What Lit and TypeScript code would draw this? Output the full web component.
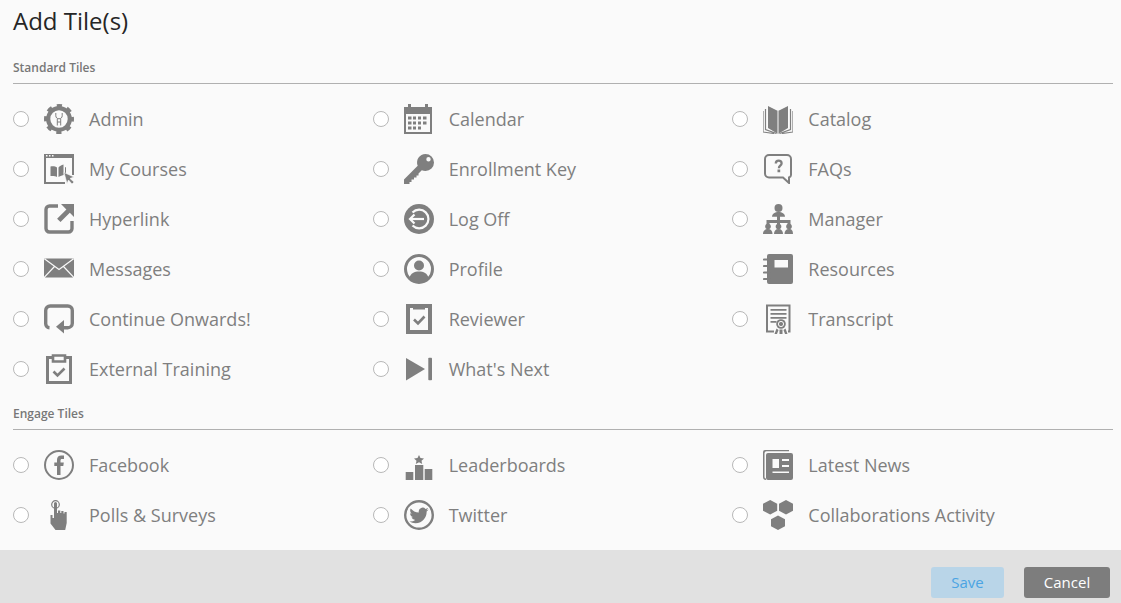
import { LitElement, html, css, svg } from "lit";
import { customElement } from "lit/decorators.js";

const bg = "#fafafa";
const icons: Record<string, unknown> = {
  admin: svg`<circle cx="15" cy="15" r="10.800" fill="none" stroke-width="4.200"/><circle cx="15" cy="15" r="13.400" fill="none" stroke-width="3.200" stroke-dasharray="5.200 5.320" stroke-dashoffset="2.600"/><path d="M11.800 9v2.800c0 1.800 1.400 3 3.200 3s3.200-1.200 3.200-3V9M13.300 14.800v6.700M16.700 14.800v6.700M13.300 18h3.400" fill="none" stroke-width="1"/>`,
  courses: svg`<path d="M0 0h30v4H0zM0 4h2v24h19v2H0z"/><path d="M28 4h2v17h-2z"/><path d="M2 1h1.500v1.500H2zM5 1h1.500v1.500H5zM8 1h1.500v1.500H8z" fill="${bg}"/><path d="M6.500 12.500c2.500-.500 5-.200 6.500 1v9.500c-1.500-1-4-1.300-6.500-1zM14.500 13.500c1-1.300 3-2.500 5-3v10.500c-2 .500-4 1.300-5 2zM21 13v8l1 .500v-8z"/><path d="M20 18.500l10 4.500-4 1.500 4 3.500-2 2-3.500-4-1.500 3.500z" stroke="${bg}" stroke-width=".6"/>`,
  hyperlink: svg`<path d="M14 2H5.500A3.500 3.500 0 0 0 2 5.500v19A3.500 3.500 0 0 0 5.500 28h19a3.500 3.500 0 0 0 3.500-3.500V17" fill="none" stroke-width="3.400"/><path d="M17 0h13v13l-4.200-4.200-9.300 9.300-3.400-3.400 9.300-9.300z"/>`,
  messages: svg`<path d="M0 4h30v20H0z"/><path d="M0 4.500l15 11 15-11M0 23.500l10.500-11M30 23.500l-10.500-11M0 24h30M1 4h28" fill="none" stroke="${bg}" stroke-width="1.200"/>`,
  onwards: svg`<path d="M5.500 23.700A4 4 0 0 1 1.700 19.700V6.500a4.500 4.500 0 0 1 4.500-4.500h17.600a4.500 4.500 0 0 1 4.500 4.500v12.700a4.500 4.500 0 0 1-4.500 4.500H16" fill="none" stroke-width="3.400"/><path d="M12 22.800l8-6.800v13.500z"/>`,
  external: svg`<path d="M9 3.500H3.500v25h23v-25H21" fill="none" stroke-width="3"/><path d="M9 1.500h12v6H9z" fill="none" stroke-width="2.600"/><path d="M9.500 17.500l4 4 7-7" fill="none" stroke-width="2.600"/>`,
  calendar: svg`<path fill-rule="evenodd" d="M0 3h4V0h3v3h14V0h3v3h4v27H0zM2 10v18h24V10z"/><path d="M4 12.500h3.500v3H4zM9 12.500h3v3H9zM14 12.500h3v3h-3zM19 12.500h3.500v3H19zM4 17.500h3.500v3H4zM9 17.500h3v3H9zM14 17.500h3v3h-3zM19 17.500h3.500v3H19zM4 22.500h3.500v3H4zM9 22.500h3v3H9zM14 22.500h3v3h-3z"/>`,
  key: svg`<path fill-rule="evenodd" d="M21.500 0A8.500 8.500 0 0 1 30 8.500 8.500 8.500 0 0 1 21.500 17c-1.300 0-2.600-.300-3.700-.800l-3.300 3.300v2h-2v2h-2.500v2h-2.500v2.500H5.500V30H0v-4.500L13.700 11.800A8.500 8.500 0 0 1 21.500 0zM24.500 3a2.200 2.200 0 1 0 0 4.400A2.200 2.200 0 0 0 24.500 3z"/>`,
  logoff: svg`<circle cx="15" cy="15" r="15"/><path d="M8.500 8.500A9.300 9.300 0 1 1 8.500 21.500" fill="none" stroke="${bg}" stroke-width="2.200"/><path d="M20 15H6" fill="none" stroke="${bg}" stroke-width="2.200"/><path d="M10.500 10.500L6 15l4.500 4.500" fill="none" stroke="${bg}" stroke-width="2.200"/>`,
  profile: svg`<circle cx="15" cy="15" r="13.500" fill="none" stroke-width="3"/><circle cx="15" cy="11.500" r="5"/><path d="M5.500 24c1-5 5-6.500 9.500-6.500s8.500 1.500 9.500 6.500A13 13 0 0 1 15 28a13 13 0 0 1-9.500-4z"/>`,
  reviewer: svg`<path fill-rule="evenodd" d="M2 0h26v30H2zM6 4v22h18V4h-3v1.500H9V4z"/><path d="M10 15.500l4 4 6.500-7" fill="none" stroke-width="2.600"/>`,
  next: svg`<path d="M2 4l19 11L2 26.500z"/><rect x="24.300" y="3.700" width="3.700" height="22.600" rx=".8"/>`,
  catalog: svg`<path d="M15 7L5 2v22l10 6 10-6V2z"/><path d="M15 7v23" fill="none" stroke="${bg}" stroke-width="1"/><path d="M2.500 5v20.500l11 4M27.500 5v20.500l-11 4M0 7v21l11 1.500M30 7v21l-11 1.500" fill="none" stroke-width="1.200"/>`,
  faqs: svg`<path d="M6 1h18a4 4 0 0 1 4 4v16c0 1.500-.800 2-2 2.500V29l-6-5.500H6a4 4 0 0 1-4-4V5a4 4 0 0 1 4-4z" fill="none" stroke-width="2"/><path d="M12.800 9.500c0-3.800 5.800-3.800 5.800-.300 0 2.600-2.700 2.400-2.700 5" fill="none" stroke-width="2.300"/><path d="M14.500 15.500h2.700v2.700h-2.700z"/>`,
  manager: svg`<circle cx="15.500" cy="4" r="4"/><path d="M9 12.700c0-3 3-4.700 6.500-4.700s6.500 1.700 6.500 4.700z"/><path d="M14 12h3v4h10.500v6h-3v-3H17v3h-3v-3H6.500v3h-3v-6H14z"/><circle cx="5" cy="22.500" r="2.800"/><circle cx="15.500" cy="22.500" r="2.800"/><circle cx="26" cy="22.500" r="2.800"/><path d="M0 30c0-3 2-5 5-5s4.500 2 4.500 5zM11 30c0-3 1.500-5 4.500-5s4.500 2 4.500 5zM21.500 30c0-3 1.500-5 4.500-5s4 2 4 5z"/>`,
  resources: svg`<path fill-rule="evenodd" d="M4 2a2 2 0 0 1 2-2h22a2 2 0 0 1 2 2v26a2 2 0 0 1-2 2H6a2 2 0 0 1-2-2zM11.500 6v7.500h13.500V6z"/><path d="M1 5.500h5M1 12h5M1 18.500h5M1 25h5" fill="none" stroke-width="2.200" stroke-linecap="round"/>`,
  transcript: svg`<g transform="translate(1 0)"><path d="M10 27.500H3V1.500h22.500v26H24" fill="none" stroke-width="2"/><path d="M6.500 5h16v1.800h-16zM6.500 9h16v1.800h-16zM6.500 13h16v1.800h-16zM6.500 17h6v1.800h-6z"/><circle cx="17" cy="20" r="4.800"/><circle cx="17" cy="20" r="2.600" fill="none" stroke="${bg}" stroke-width="1"/><path d="M12.500 24.500l-2 5.500h2.500l1.500-4zM21.500 24.500l2 5.500H21l-1.500-4zM15.500 25.500h3V30h-3z"/></g>`,
  facebook: svg`<circle cx="15" cy="15" r="14" fill="none" stroke-width="2"/><path d="M13 25v-9h-2.700v-3.500H13v-2.700c0-2.800 1.700-4.300 4.200-4.300h2.800v3.400h-2c-1.200 0-1.500.600-1.500 1.500v2.100h3.300l-.500 3.500h-2.800v9z"/>`,
  polls: svg`<g transform="translate(2.500 0)"><circle cx="9" cy="4.500" r="3.800" fill="none" stroke-width="1.200"/><path d="M7.500 3.500a1.500 1.500 0 0 1 3 0V13h1v-2.500h2.300V13h1v-2h2.200v2.500h1V12h2.200v11l-1.500 7H9L4 23.500V15h2v3h1.500z"/></g>`,
  leader: svg`<path d="M1.700 22h7.600v8H1.700zM11 15h8.300v15H11zM20.700 19h7.600v11h-7.600z"/><path transform="translate(-.5 2.500)" d="M15.500 2.500l1.500 3 3.500.400-2.500 2.300.7 3.300-3.200-1.700-3.200 1.700.7-3.300-2.500-2.300 3.500-.400z"/>`,
  twitter: svg`<circle cx="15" cy="15" r="13.800" fill="none" stroke-width="2.400"/><path transform="translate(5.400 5.900) scale(.8)" d="M23.953 4.570a10 10 0 01-2.825.775 4.958 4.958 0 002.163-2.723c-.951.555-2.005.959-3.127 1.184a4.920 4.920 0 00-8.384 4.482C7.690 8.095 4.067 6.130 1.640 3.162a4.822 4.822 0 00-.666 2.475c0 1.710.870 3.213 2.188 4.096a4.904 4.904 0 01-2.228-.616v.060a4.923 4.923 0 003.946 4.827 4.996 4.996 0 01-2.212.085 4.936 4.936 0 004.604 3.417 9.867 9.867 0 01-6.102 2.105c-.390 0-.779-.023-1.170-.067a13.995 13.995 0 007.557 2.209c9.053 0 13.998-7.496 13.998-13.985 0-.210 0-.420-.015-.630A9.935 9.935 0 0024 4.590z"/>`,
  news: svg`<path d="M2 0h24v1.200H3.500a2 2 0 0 0-2 2V27a1.500 1.500 0 0 0 1.500 1.500V30A3 3 0 0 1 0 27V2a2 2 0 0 1 2-2z"/><path fill-rule="evenodd" d="M5 3h23a2 2 0 0 1 2 2v23a2 2 0 0 1-2 2H5a2 2 0 0 1-2-2V5a2 2 0 0 1 2-2zM9.500 9v9H16V9zM19 9v2h7V9zM19 15v2h7v-2zM9.500 21.500v1.500H26v-1.500z"/>`,
  collab: svg`<path d="M7.200 0l7 3.800v7l-7 3.800-7.200-3.800v-7zM23 0l7 3.800v7l-7 3.800-7-3.800v-7zM15 15.400l7 3.800v7L15 30l-7-3.800v-7z"/>`,
};

const standard = [
  ["admin", "Admin"], ["calendar", "Calendar"], ["catalog", "Catalog"],
  ["courses", "My Courses"], ["key", "Enrollment Key"], ["faqs", "FAQs"],
  ["hyperlink", "Hyperlink"], ["logoff", "Log Off"], ["manager", "Manager"],
  ["messages", "Messages"], ["profile", "Profile"], ["resources", "Resources"],
  ["onwards", "Continue Onwards!"], ["reviewer", "Reviewer"], ["transcript", "Transcript"],
  ["external", "External Training"], ["next", "What's Next"],
];
const engage = [
  ["facebook", "Facebook"], ["leader", "Leaderboards"], ["news", "Latest News"],
  ["polls", "Polls & Surveys"], ["twitter", "Twitter"], ["collab", "Collaborations Activity"],
];

@customElement("app-root")
export class AppRoot extends LitElement {
  static styles = css`
    :host {
      display: block;
      width: 1121px;
      height: 603px;
      overflow: hidden;
      background: #fafafa;
      font-family: "Open Sans", sans-serif;
      color: #7f7f7f;
    }
    .page { display: flex; flex-direction: column; height: 603px; }
    .content { flex: 1; padding: 0 8px 0 13px; }
    h1 {
      margin: 0;
      height: 48px;
      padding-top: 4px;
      box-sizing: border-box;
      font-size: 24px;
      line-height: 34px;
      font-weight: 400;
      color: #262626;
    }
    h2 {
      margin: 0;
      height: 36px;
      box-sizing: border-box;
      padding-top: 12px;
      font-size: 12px;
      line-height: 16px;
      font-weight: 600;
      color: #777;
      border-bottom: 1px solid #b0b0b0;
    }
    .grid {
      display: grid;
      grid-template-columns: repeat(3, 359.67px);
      padding-top: 10px;
    }
    label { display: flex; align-items: center; height: 50px; font-size: 18px; }
    input {
      appearance: none;
      width: 16px;
      height: 16px;
      margin: 0 15px 0 0;
      border: 1px solid #b8b8b8;
      border-radius: 50%;
      background: #fff;
      flex: none;
    }
    svg { width: 30px; height: 30px; fill: #7f7f7f; stroke: #7f7f7f; stroke-width: 0; flex: none; margin-right: 15px; }
    footer {
      height: 53px;
      background: #e1e1e1;
      display: flex;
      justify-content: flex-end;
      gap: 20px;
      padding: 17px 11px 5px 0;
      box-sizing: border-box;
    }
    button {
      font: 400 15px "Open Sans", sans-serif;
      border: 0;
      border-radius: 3px;
      padding: 0 0 2px;
      height: 31px;
    }
    .save { width: 73px; background: #b9d5e8; color: #4ba4e3; }
    .cancel { width: 86px; background: #7d7d7d; color: #fff; }
  `;

  private tile(t: string[]) {
    return html`<label>
      <input type="radio" name="tile" />
      <svg viewBox="0 0 30 30" aria-hidden="true">${icons[t[0]]}</svg>
      <span>${t[1]}</span>
    </label>`;
  }

  render() {
    return html`<div class="page">
      <div class="content">
        <h1>Add Tile(s)</h1>
        <h2>Standard Tiles</h2>
        <div class="grid">${standard.map((t) => this.tile(t))}</div>
        <h2>Engage Tiles</h2>
        <div class="grid">${engage.map((t) => this.tile(t))}</div>
      </div>
      <footer>
        <button class="save">Save</button>
        <button class="cancel">Cancel</button>
      </footer>
    </div>`;
  }
}
